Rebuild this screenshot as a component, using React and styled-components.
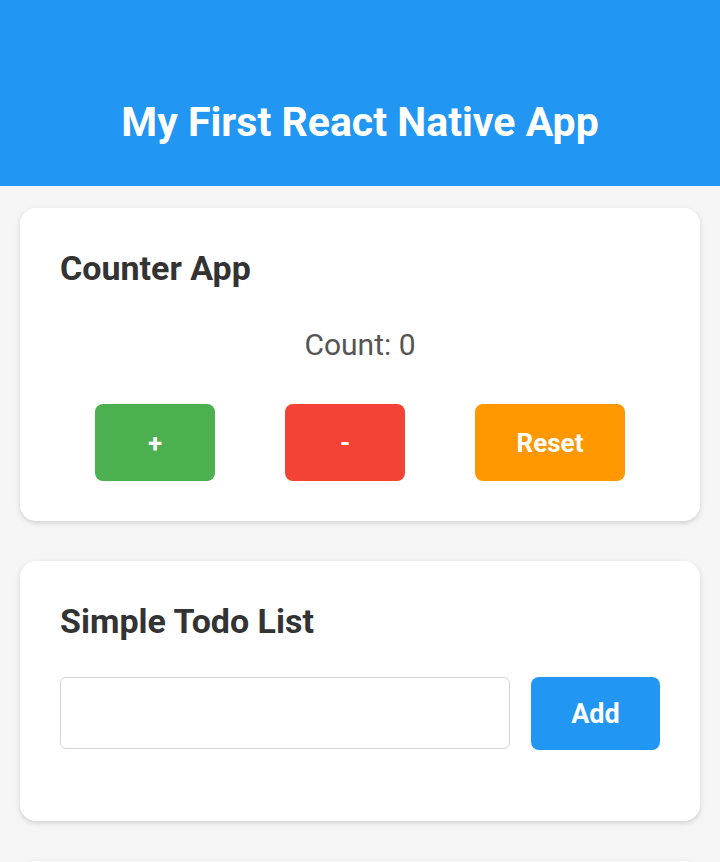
import React, { useState } from 'react';
import styled, { createGlobalStyle } from 'styled-components';

const Global = createGlobalStyle`
  html, body { margin: 0; padding: 0; background: #f5f5f5; }
  body { font-family: Roboto, "Noto Sans", "Liberation Sans", sans-serif; }
  * { box-sizing: border-box; }
`;

const Screen = styled.div`
  min-height: 862px;
  background: #f5f5f5;
`;

const Header = styled.header`
  height: 186px;
  background: #2196f3;
  display: flex;
  align-items: flex-end;
  justify-content: center;
  padding-bottom: 40px;
`;

const HeaderTitle = styled.h1`
  margin: 0;
  color: #fff;
  font-size: 41px;
  font-weight: 700;
  line-height: 48px;
`;

const Body = styled.main`
  padding: 22px 20px;
  display: flex;
  flex-direction: column;
  gap: 40px;
`;

const Card = styled.section`
  background: #fff;
  border-radius: 16px;
  padding: 40px 40px ${p => p.$bottom || 40}px;
  box-shadow: 0 2px 5px rgba(0, 0, 0, 0.15);
`;

const CardTitle = styled.h2`
  margin: 0;
  color: #333;
  font-size: 34px;
  font-weight: 700;
  line-height: 40px;
`;

const Count = styled.p`
  margin: 40px 0 42px;
  text-align: center;
  color: #555;
  font-size: 30px;
  line-height: 34px;
`;

const ButtonRow = styled.div`
  display: flex;
  justify-content: space-around;
`;

const CounterButton = styled.button`
  width: ${p => p.$width}px;
  height: 77px;
  border: none;
  border-radius: 8px;
  background: ${p => p.$color};
  color: #fff;
  font-family: inherit;
  font-size: 26px;
  font-weight: 700;
  cursor: pointer;
`;

const InputRow = styled.div`
  display: flex;
  gap: 21px;
  margin-top: 36px;
`;

const TodoInput = styled.input`
  flex: 1;
  height: 72px;
  border: 1.5px solid #d4d4d4;
  border-radius: 6px;
  padding: 0 16px;
  font-family: inherit;
  font-size: 24px;
  outline: none;
`;

const AddButton = styled.button`
  width: 129px;
  height: 73px;
  border: none;
  border-radius: 8px;
  background: #2196f3;
  color: #fff;
  font-family: inherit;
  font-size: 27px;
  font-weight: 700;
  cursor: pointer;
`;

export default function App() {
  const [count, setCount] = useState(0);
  const [text, setText] = useState('');

  return (
    <Screen>
      <Global />
      <Header>
        <HeaderTitle>My First React Native App</HeaderTitle>
      </Header>
      <Body>
        <Card>
          <CardTitle>Counter App</CardTitle>
          <Count>Count: {count}</Count>
          <ButtonRow>
            <CounterButton $color="#4caf50" $width={120} onClick={() => setCount(count + 1)}>+</CounterButton>
            <CounterButton $color="#f44336" $width={120} onClick={() => setCount(count - 1)}>-</CounterButton>
            <CounterButton $color="#ff9800" $width={150} onClick={() => setCount(0)}>Reset</CounterButton>
          </ButtonRow>
        </Card>
        <Card $bottom={71}>
          <CardTitle>Simple Todo List</CardTitle>
          <InputRow>
            <TodoInput value={text} onChange={e => setText(e.target.value)} />
            <AddButton>Add</AddButton>
          </InputRow>
        </Card>
        <Card />
      </Body>
    </Screen>
  );
}
